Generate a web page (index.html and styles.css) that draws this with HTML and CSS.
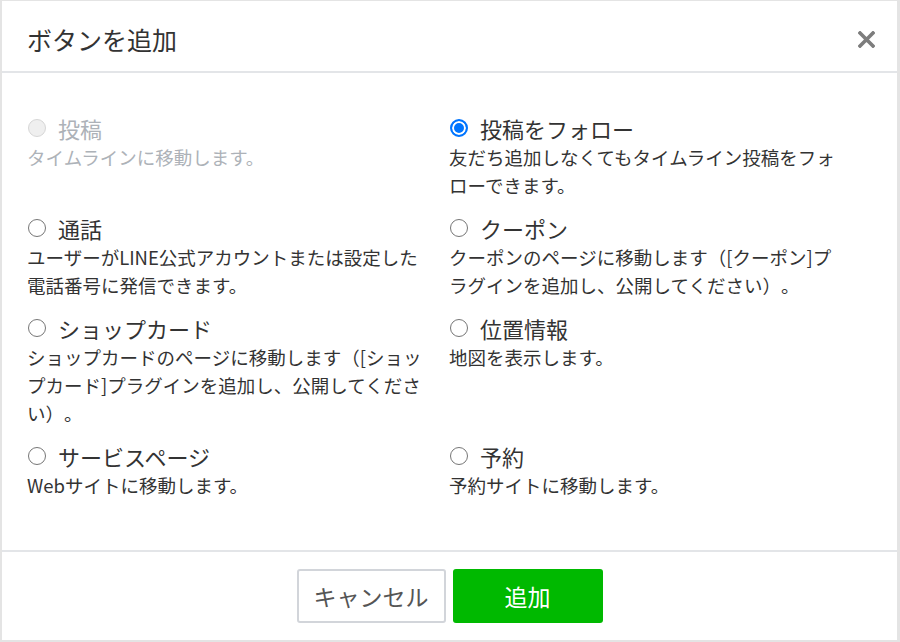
FILE: index.html
```html
<!DOCTYPE html>
<html lang="ja">
<head>
<meta charset="utf-8">
<title>ボタンを追加</title>
<link rel="stylesheet" href="styles.css">
</head>
<body>
<div class="modal">
  <div class="header">
    <h1 class="title">ボタンを追加</h1>
    <button class="close" aria-label="閉じる">
      <svg width="17" height="17" viewBox="0 0 17 17"><path d="M2 2 L15 15 M15 2 L2 15" stroke="#7d7d7d" stroke-width="3.6" stroke-linecap="square"/></svg>
    </button>
  </div>
  <div class="body">
    <div class="opt disabled">
      <label class="opt-title"><span class="radio radio-disabled"></span>投稿</label>
      <p class="desc">タイムラインに移動します。</p>
    </div>
    <div class="opt">
      <label class="opt-title"><span class="radio radio-on"></span>投稿をフォロー</label>
      <p class="desc">友だち追加しなくてもタイムライン投稿をフォ<br>ローできます。</p>
    </div>
    <div class="opt">
      <label class="opt-title"><span class="radio"></span>通話</label>
      <p class="desc">ユーザーがLINE公式アカウントまたは設定した<br>電話番号に発信できます。</p>
    </div>
    <div class="opt">
      <label class="opt-title"><span class="radio"></span>クーポン</label>
      <p class="desc">クーポンのページに移動します（[クーポン]プ<br>ラグインを追加し、公開してください）。</p>
    </div>
    <div class="opt">
      <label class="opt-title"><span class="radio"></span>ショップカード</label>
      <p class="desc">ショップカードのページに移動します（[ショッ<br>プカード]プラグインを追加し、公開してくださ<br>い）。</p>
    </div>
    <div class="opt">
      <label class="opt-title"><span class="radio"></span>位置情報</label>
      <p class="desc">地図を表示します。</p>
    </div>
    <div class="opt">
      <label class="opt-title"><span class="radio"></span>サービスページ</label>
      <p class="desc">Webサイトに移動します。</p>
    </div>
    <div class="opt">
      <label class="opt-title"><span class="radio"></span>予約</label>
      <p class="desc">予約サイトに移動します。</p>
    </div>
  </div>
  <div class="footer">
    <button class="btn btn-cancel">キャンセル</button>
    <button class="btn btn-add">追加</button>
  </div>
</div>
</body>
</html>
```
FILE: styles.css
```css
html, body {
  margin: 0;
  padding: 0;
  background: #fff;
}
body {
  font-family: "Noto Sans CJK JP", "Noto Sans", sans-serif;
  color: #333;
  text-spacing-trim: space-all;
}
.modal {
  width: 900px;
  height: 642px;
  box-sizing: border-box;
  border-style: solid;
  border-color: #e4e4e4;
  border-width: 1px 3px 2px 2px;
  display: flex;
  flex-direction: column;
  background: #fff;
}
.header {
  height: 72px;
  box-sizing: border-box;
  padding: 6px 22px 0 25px;
  border-bottom: 2px solid #e3e5e8;
  display: flex;
  align-items: center;
  justify-content: space-between;
  flex: none;
}
.title {
  margin: 0;
  font-size: 25px;
  font-weight: normal;
  line-height: 1;
  color: #333;
}
.close {
  border: 0;
  background: none;
  padding: 0;
  width: 17px;
  height: 17px;
  display: block;
}
.close svg { display: block; }
.body {
  flex: 1;
  box-sizing: border-box;
  padding: 40px 26px 0 25px;
  display: grid;
  grid-template-columns: 422px 422px;
  grid-auto-rows: min-content;
  row-gap: 14px;
}
.opt-title {
  display: flex;
  align-items: center;
  height: 30px;
  font-size: 22px;
  line-height: 30px;
  color: #333;
}
.radio {
  width: 18px;
  height: 18px;
  box-sizing: border-box;
  border-radius: 50%;
  border: 1px solid #767676;
  background: #fff;
  margin-right: 12px;
  margin-left: 1px;
  flex: none;
}
.radio-on {
  border: 2px solid #0075ff;
  background: #0075ff;
  box-shadow: inset 0 0 0 2px #fff;
}
.radio-disabled {
  border: 1px solid #d6d6d6;
  background: #efefef;
}
.desc {
  margin: 0;
  font-size: 18.5px;
  line-height: 28px;
  white-space: nowrap;
  color: #333;
}
.disabled .opt-title,
.disabled .desc {
  color: #adb2b8;
}
.footer {
  height: 90px;
  box-sizing: border-box;
  border-top: 2px solid #e3e5e8;
  display: flex;
  justify-content: center;
  align-items: flex-start;
  padding-top: 17px;
  gap: 7px;
  flex: none;
}
.btn {
  width: 150px;
  height: 54px;
  box-sizing: border-box;
  border-radius: 3px;
  font-family: "Noto Sans CJK JP", "Noto Sans", sans-serif;
  font-size: 23px;
  line-height: 1;
  padding: 0;
}
.btn-cancel {
  width: 149px;
  background: #fff;
  border: 2px solid #d2d5da;
  color: #555;
}
.btn-add {
  background: #00b900;
  border: 0;
  color: #fff;
}
```
